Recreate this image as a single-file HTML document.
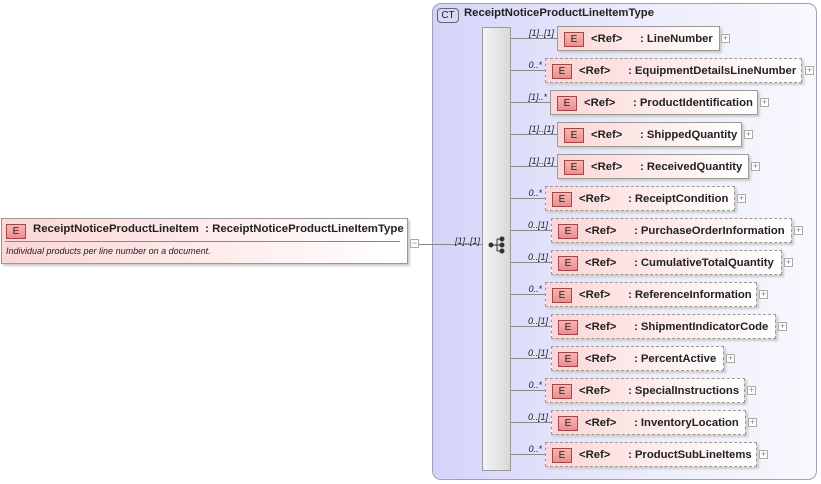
<!DOCTYPE html>
<html><head><meta charset="utf-8"><style>
body{margin:0;width:821px;height:484px;background:#fff;position:relative;overflow:hidden;font-family:"Liberation Sans",sans-serif;}
.a{position:absolute}
.ct{left:432px;top:3px;width:385px;height:477px;border:1px solid #a0a0b8;border-radius:9px;background:linear-gradient(90deg,#d4d4fa,#eeeefc 60%,#f8f8fe);box-sizing:border-box}
.bar{left:482px;top:27px;width:29px;height:444px;background:linear-gradient(90deg,#f4f4f4,#d8d8d8);border:1px solid #999;box-sizing:border-box}
.box{position:absolute;height:25px;background:linear-gradient(90deg,#fcd6d6,#fff);border:1px solid #999;box-sizing:border-box;font-size:11.3px;font-weight:bold;color:#222;box-shadow:2px 2px 2px #ccc}
.d{border:1px dashed #999}
.e{position:absolute;left:6px;top:5px;width:20px;height:15px;background:linear-gradient(#f6b6b6,#f08c8c);border:1px solid #a04848;box-sizing:border-box;font-size:10px;font-weight:normal;text-align:center;line-height:14px;color:#222}
.r{position:absolute;left:33px;top:6px}
.n{position:absolute;left:82px;top:6px;white-space:nowrap}
.pl{position:absolute;width:9px;height:9px;border:1px solid #aaa;background:#fff;font-size:9px;line-height:7px;text-align:center;color:#888;box-sizing:border-box}
.ln{position:absolute;height:1px;background:#888}
.c{position:absolute;font-size:9px;font-style:italic;color:#222;text-align:right;width:40px}
</style></head><body>
<div class="a ct"></div>
<div class="a" style="left:437px;top:8px;width:20px;height:13px;border:1px solid #666;border-radius:4px;background:#d8d8f8;font-size:10px;text-align:center;line-height:13px;color:#222">CT</div>
<div class="a" style="left:464px;top:7px;font-size:11.3px;font-weight:bold;color:#222">ReceiptNoticeProductLineItemType</div>
<div class="a bar"></div>
<svg class="a" style="left:488px;top:236px" width="18" height="18" viewBox="0 0 18 18"><g fill="#333" stroke="#333"><circle cx="3" cy="9" r="2"/><line x1="3" y1="9" x2="9" y2="9"/><line x1="9" y1="3" x2="9" y2="15"/><line x1="9" y1="3" x2="14" y2="3"/><line x1="9" y1="9" x2="14" y2="9"/><line x1="9" y1="15" x2="14" y2="15"/><circle cx="14" cy="3" r="2"/><circle cx="14" cy="9" r="2"/><circle cx="14" cy="15" r="2"/></g></svg>

<div class="a" style="left:1px;top:218px;width:407px;height:46px;border:1px solid #999;background:linear-gradient(90deg,#fcd6d6,#fff);box-sizing:border-box;box-shadow:2px 2px 2px #ccc"></div>
<div class="e" style="left:6px;top:224px">E</div>
<div class="a" style="left:33px;top:223px;font-size:11.4px;font-weight:bold;color:#222;white-space:nowrap">ReceiptNoticeProductLineItem&nbsp; : ReceiptNoticeProductLineItemType</div>
<div class="a" style="left:5px;top:241px;width:395px;height:1px;background:#888"></div>
<div class="a" style="left:6px;top:246px;font-size:9px;font-style:italic;color:#222">Individual products per line number on a document.</div>
<div class="pl" style="left:410px;top:239px;line-height:6px">−</div>
<div class="ln" style="left:419px;top:244px;width:63px"></div>
<div class="c" style="left:440px;top:236px">[1]..[1]</div>

<div class="ln" style="left:511px;top:38px;width:46px"></div><div class="c" style="left:514px;top:28px">[1]..[1]</div><div class="box" style="left:557px;top:26px;width:163px"><div class="e">E</div><span class="r">&lt;Ref&gt;</span><span class="n">: LineNumber</span></div><div class="pl" style="left:721px;top:34px">+</div>
<div class="ln" style="left:511px;top:70px;width:34px"></div><div class="c" style="left:502px;top:60px">0..*</div><div class="box d" style="left:545px;top:58px;width:257px"><div class="e">E</div><span class="r">&lt;Ref&gt;</span><span class="n">: EquipmentDetailsLineNumber</span></div><div class="pl" style="left:805px;top:66px">+</div>
<div class="ln" style="left:511px;top:102px;width:39px"></div><div class="c" style="left:507px;top:92px">[1]..*</div><div class="box" style="left:550px;top:90px;width:208px"><div class="e">E</div><span class="r">&lt;Ref&gt;</span><span class="n">: ProductIdentification</span></div><div class="pl" style="left:760px;top:98px">+</div>
<div class="ln" style="left:511px;top:134px;width:46px"></div><div class="c" style="left:514px;top:124px">[1]..[1]</div><div class="box" style="left:557px;top:122px;width:185px"><div class="e">E</div><span class="r">&lt;Ref&gt;</span><span class="n">: ShippedQuantity</span></div><div class="pl" style="left:744px;top:130px">+</div>
<div class="ln" style="left:511px;top:166px;width:46px"></div><div class="c" style="left:514px;top:156px">[1]..[1]</div><div class="box" style="left:557px;top:154px;width:192px"><div class="e">E</div><span class="r">&lt;Ref&gt;</span><span class="n">: ReceivedQuantity</span></div><div class="pl" style="left:751px;top:162px">+</div>
<div class="ln" style="left:511px;top:198px;width:34px"></div><div class="c" style="left:502px;top:188px">0..*</div><div class="box d" style="left:545px;top:186px;width:190px"><div class="e">E</div><span class="r">&lt;Ref&gt;</span><span class="n">: ReceiptCondition</span></div><div class="pl" style="left:737px;top:194px">+</div>
<div class="ln" style="left:511px;top:230px;width:40px"></div><div class="c" style="left:508px;top:220px">0..[1]</div><div class="box d" style="left:551px;top:218px;width:241px"><div class="e">E</div><span class="r">&lt;Ref&gt;</span><span class="n">: PurchaseOrderInformation</span></div><div class="pl" style="left:794px;top:226px">+</div>
<div class="ln" style="left:511px;top:262px;width:40px"></div><div class="c" style="left:508px;top:252px">0..[1]</div><div class="box d" style="left:551px;top:250px;width:231px"><div class="e">E</div><span class="r">&lt;Ref&gt;</span><span class="n">: CumulativeTotalQuantity</span></div><div class="pl" style="left:784px;top:258px">+</div>
<div class="ln" style="left:511px;top:294px;width:34px"></div><div class="c" style="left:502px;top:284px">0..*</div><div class="box d" style="left:545px;top:282px;width:212px"><div class="e">E</div><span class="r">&lt;Ref&gt;</span><span class="n">: ReferenceInformation</span></div><div class="pl" style="left:759px;top:290px">+</div>
<div class="ln" style="left:511px;top:326px;width:40px"></div><div class="c" style="left:508px;top:316px">0..[1]</div><div class="box d" style="left:551px;top:314px;width:225px"><div class="e">E</div><span class="r">&lt;Ref&gt;</span><span class="n">: ShipmentIndicatorCode</span></div><div class="pl" style="left:778px;top:322px">+</div>
<div class="ln" style="left:511px;top:358px;width:40px"></div><div class="c" style="left:508px;top:348px">0..[1]</div><div class="box d" style="left:551px;top:346px;width:173px"><div class="e">E</div><span class="r">&lt;Ref&gt;</span><span class="n">: PercentActive</span></div><div class="pl" style="left:726px;top:354px">+</div>
<div class="ln" style="left:511px;top:390px;width:34px"></div><div class="c" style="left:502px;top:380px">0..*</div><div class="box d" style="left:545px;top:378px;width:200px"><div class="e">E</div><span class="r">&lt;Ref&gt;</span><span class="n">: SpecialInstructions</span></div><div class="pl" style="left:747px;top:386px">+</div>
<div class="ln" style="left:511px;top:422px;width:40px"></div><div class="c" style="left:508px;top:412px">0..[1]</div><div class="box d" style="left:551px;top:410px;width:195px"><div class="e">E</div><span class="r">&lt;Ref&gt;</span><span class="n">: InventoryLocation</span></div><div class="pl" style="left:748px;top:418px">+</div>
<div class="ln" style="left:511px;top:454px;width:34px"></div><div class="c" style="left:502px;top:444px">0..*</div><div class="box d" style="left:545px;top:442px;width:212px"><div class="e">E</div><span class="r">&lt;Ref&gt;</span><span class="n">: ProductSubLineItems</span></div><div class="pl" style="left:759px;top:450px">+</div>
</body></html>
